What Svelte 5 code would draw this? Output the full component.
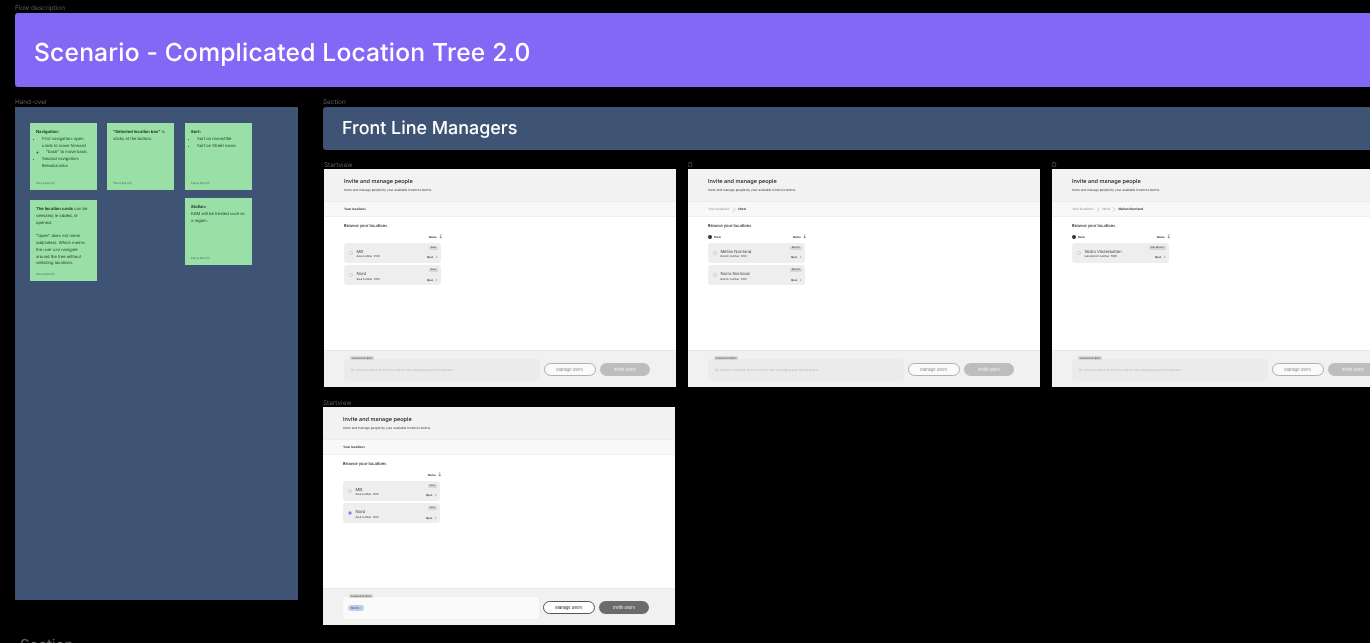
<script>
    const frames = [
        {
            label: "Startview", x: 324, y: 169,
            crumbs: [], back: false, selected: null,
            cards: [
                { name: "Mitt", sub: "Area number: 2100", tag: "Area" },
                { name: "Nord", sub: "Area number: 2100", tag: "Area" },
            ],
        },
        {
            label: "D", x: 688, y: 169,
            crumbs: ["Your locations"], current: "Nord", back: true, selected: null,
            cards: [
                { name: "Mellan Norrland", sub: "Branch number: 2100", tag: "Branch" },
                { name: "Norra Norrland", sub: "Branch number: 2100", tag: "Branch" },
            ],
        },
        {
            label: "D", x: 1052, y: 169,
            crumbs: ["Your locations", "Nord"], current: "Mellan Norrland", back: true, selected: null,
            cards: [
                { name: "Södra Västerbotten", sub: "Sub-Branch number: 7900", tag: "Sub-Branch" },
            ],
        },
        {
            label: "Startview", x: 323, y: 407,
            crumbs: [], back: false, selected: "Nord",
            cards: [
                { name: "Mitt", sub: "Area number: 2100", tag: "Area" },
                { name: "Nord", sub: "Area number: 2100", tag: "Area" },
            ],
        },
    ];
</script>

<div class="canvas">
    <div class="label top-label" style="left: 15px; top: 5px;">Flow description</div>
    <div class="banner">Scenario - Complicated Location Tree 2.0</div>

    <div class="label top-label" style="left: 15px; top: 99px;">Hand-over</div>
    <div class="handover">
        <div class="note" style="left: 15px; top: 16px;">
            <div class="note__body">
                <b>Navigation:</b>
                <ul>
                    <li>First navigation: open cards to move forward
                        <ul><li>"back" to move back.</li></ul>
                    </li>
                    <li>Second navigation: Breadcrumbs</li>
                </ul>
            </div>
            <div class="note__author">Fanny Barrsjö</div>
        </div>
        <div class="note" style="left: 92px; top: 16px;">
            <div class="note__body"><b>"Selected location box"</b> is sticky at the bottom.</div>
            <div class="note__author">Fanny Barrsjö</div>
        </div>
        <div class="note" style="left: 170px; top: 16px;">
            <div class="note__body">
                <b>Sort:</b>
                <ul>
                    <li>Sort on name/title</li>
                    <li>Sort on Street name</li>
                </ul>
            </div>
            <div class="note__author">Fanny Barrsjö</div>
        </div>
        <div class="note note--tall" style="left: 15px; top: 93px;">
            <div class="note__body">
                <b>The location cards</b> can be selected; ie added, or opened.<br /><br />
                "Open" does not mean add/select. Which means the user can navigate around the tree without selecting locations.
            </div>
            <div class="note__author">Fanny Barrsjö</div>
        </div>
        <div class="note" style="left: 170px; top: 91px;">
            <div class="note__body"><b>Stolian:</b><br />KAM will be treated such as a region.</div>
            <div class="note__author">Fanny Barrsjö</div>
        </div>
    </div>

    <div class="label top-label" style="left: 323px; top: 99px;">Section</div>
    <div class="section-head">Front Line Managers</div>

    {#each frames as frame}
        <div class="label frame-label" style="left: {frame.x}px; top: {frame.y - 7}px;">{frame.label}</div>
        <div class="frame" style="left: {frame.x}px; top: {frame.y}px;">
            <header class="frame__head">
                <h1>Invite and manage people</h1>
                <p>Invite and manage people by your available locations below.</p>
            </header>
            <nav class="crumbs">
                {#each frame.crumbs as crumb}
                    <span class="crumbs__link">{crumb}</span>
                    <svg class="crumbs__sep" viewBox="0 0 6 8"><path d="M1.5 .8 4.6 4 1.5 7.2" /></svg>
                {/each}
                <span class="crumbs__current">{frame.current ?? "Your locations"}</span>
            </nav>
            <main class="browse">
                <h2>Browse your locations</h2>
                <div class="browse__bar">
                    {#if frame.back}
                        <span class="back"><i></i>Back</span>
                    {/if}
                    <span class="sort">Name
                        <svg viewBox="0 0 6 8"><path d="M3 .6V7M1 5l2 2.2L5 5" /></svg>
                    </span>
                </div>
                <div class="cards">
                    {#each frame.cards as card}
                        <div class="card">
                            <span class="radio" class:radio--on={frame.selected === card.name}></span>
                            <div class="card__text">
                                <div class="card__name">{card.name}</div>
                                <div class="card__sub">{card.sub}</div>
                            </div>
                            <div class="card__side">
                                <span class="tag">{card.tag}</span>
                                <span class="open">Open
                                    <svg viewBox="0 0 6 8"><path d="M2 1.5 4.2 4 2 6.5" /></svg>
                                </span>
                            </div>
                        </div>
                    {/each}
                </div>
            </main>
            <footer class="foot" class:foot--active={frame.selected}>
                <div class="foot__box">
                    <span class="foot__label">Selected location</span>
                    {#if frame.selected}
                        <span class="pill">{frame.selected} ×</span>
                    {:else}
                        <span class="foot__empty">No location selected. Choose one to start managing and inviting users.</span>
                    {/if}
                </div>
                <button class="btn btn--ghost">Manage users</button>
                <button class="btn btn--solid">Invite users</button>
            </footer>
        </div>
    {/each}

    <div class="section-bottom">Section</div>
</div>

<style>
    :global(body) {
        background: #000;
        overflow: hidden;
    }

    .canvas {
        position: relative;
        width: 1370px;
        height: 643px;
        overflow: hidden;
        background: #000;
        font-family: Inter, "Liberation Sans", sans-serif;
        text-rendering: geometricPrecision;
    }

    .label {
        position: absolute;
        color: #5c5c5c;
        font-size: 6.4px;
        line-height: 7px;
        filter: blur(0.3px);
    }

    .banner {
        position: absolute;
        left: 15px;
        top: 13px;
        width: 1400px;
        height: 74px;
        box-sizing: border-box;
        padding: 3px 0 0 19px;
        display: flex;
        align-items: center;
        border-radius: 3px;
        background: #8367f5;
        color: #fff;
        font-size: 24.6px;
        font-weight: 500;
        letter-spacing: 0.2px;
        filter: blur(0.4px);
    }

    .handover {
        position: absolute;
        left: 15px;
        top: 107px;
        width: 283px;
        height: 493px;
        background: #3f5475;
    }

    .note {
        position: absolute;
        width: 67px;
        height: 67px;
        box-sizing: border-box;
        padding: 6px 5px 5px 6px;
        display: flex;
        flex-direction: column;
        justify-content: space-between;
        background: #9adfa6;
        color: #1f3a28;
        font-size: 4.1px;
        line-height: 6.8px;
        filter: blur(0.35px);
    }

    .note--tall {
        height: 81px;
    }

    .note ul {
        margin: 0;
        padding-left: 6px;
    }

    .note ul ul {
        padding-left: 4px;
    }

    .note__author {
        font-size: 2.9px;
        line-height: 4px;
        color: #4b6a55;
    }

    .section-head {
        position: absolute;
        left: 323px;
        top: 107px;
        width: 1100px;
        height: 43px;
        box-sizing: border-box;
        padding-left: 19px;
        display: flex;
        align-items: center;
        border-radius: 3px;
        background: #3f5475;
        color: #fff;
        font-size: 17.9px;
        font-weight: 500;
        filter: blur(0.35px);
    }

    .frame {
        position: absolute;
        width: 352px;
        height: 218px;
        display: flex;
        flex-direction: column;
        background: #fff;
        color: #1a1a1a;
        filter: blur(0.4px);
    }

    .frame__head {
        height: 32px;
        box-sizing: border-box;
        padding: 10px 20px 0;
        background: #f2f2f2;
    }

    h1 {
        margin: 0;
        font-size: 5.6px;
        line-height: 7px;
        font-weight: 500;
    }

    .frame__head p {
        margin: 2px 0 0;
        font-size: 3.1px;
        line-height: 4px;
        color: #333;
    }

    .crumbs {
        height: 16px;
        box-sizing: border-box;
        padding: 0 20px;
        display: flex;
        align-items: center;
        gap: 2.4px;
        background: #f8f8f8;
        font-size: 3.2px;
        border-top: 0.5px solid #ececec;
        border-bottom: 0.5px solid #f0f0f0;
    }

    .crumbs__link {
        color: #8a8a8a;
    }

    .crumbs__current {
        font-weight: 600;
    }

    .crumbs__sep {
        width: 4px;
        height: 5px;
        fill: none;
        stroke: #777;
        stroke-width: 0.6;
    }

    .browse {
        flex: 1;
        box-sizing: border-box;
        padding: 6px 20px 0;
    }

    h2 {
        margin: 0;
        font-size: 4.1px;
        line-height: 5px;
        font-weight: 500;
    }

    .browse__bar {
        width: 98px;
        height: 6px;
        margin-top: 5.5px;
        display: flex;
        align-items: center;
        justify-content: space-between;
        font-size: 2.9px;
        font-weight: 600;
    }

    .back {
        display: flex;
        align-items: center;
        gap: 2px;
    }

    .back i {
        width: 4px;
        height: 4px;
        border-radius: 50%;
        background: #333;
    }

    .sort {
        margin-left: auto;
        display: flex;
        align-items: center;
        gap: 1.5px;
    }

    .sort svg {
        width: 3.5px;
        height: 4.6px;
        fill: none;
        stroke: #222;
        stroke-width: 0.7;
    }

    .cards {
        width: 97px;
        margin-top: 3.3px;
        display: flex;
        flex-direction: column;
        gap: 2.5px;
    }

    .card {
        height: 20px;
        box-sizing: border-box;
        padding: 0 3.5px 0 4.5px;
        display: flex;
        align-items: center;
        gap: 3.5px;
        border-radius: 3px;
        background: #eeeeee;
    }

    .radio {
        width: 4.4px;
        height: 4.4px;
        box-sizing: border-box;
        border-radius: 50%;
        border: 0.5px solid #cfcfcf;
        background: #f4f4f4;
        flex: none;
    }

    .radio--on {
        border-color: #b9adf8;
        background: radial-gradient(circle, #7a5cf5 50%, #e4dffc 55%);
    }

    .card__text {
        flex: 1;
        padding-top: 2px;
    }

    .card__name {
        font-size: 4.1px;
        line-height: 5px;
        color: #444;
    }

    .card__sub {
        margin-top: 1.6px;
        font-size: 2.6px;
        line-height: 3.4px;
        color: #333;
    }

    .card__side {
        align-self: stretch;
        padding: 3.2px 0 3.6px;
        display: flex;
        flex-direction: column;
        align-items: flex-end;
        justify-content: space-between;
    }

    .tag {
        padding: 0 1.6px;
        border-radius: 1.5px;
        background: #d6d6d6;
        font-size: 2.4px;
        line-height: 4px;
        color: #333;
    }

    .open {
        display: flex;
        align-items: center;
        gap: 1.2px;
        font-size: 2.6px;
        line-height: 4px;
        font-weight: 500;
    }

    .open svg {
        width: 3px;
        height: 4px;
        fill: none;
        stroke: #333;
        stroke-width: 0.6;
    }

    .foot {
        height: 37px;
        box-sizing: border-box;
        padding: 8px 26px 7px 20px;
        display: flex;
        align-items: center;
        gap: 4.5px;
        background: #f1f1f1;
        border-top: 0.5px solid #e8e8e8;
    }

    .foot__box {
        position: relative;
        width: 195.5px;
        height: 22px;
        box-sizing: border-box;
        padding-left: 7px;
        display: flex;
        align-items: center;
        border-radius: 4px;
        background: #ebebeb;
    }

    .foot--active .foot__box {
        background: #fafafa;
        padding-left: 5px;
    }

    .foot__label {
        position: absolute;
        left: 6px;
        top: -2.4px;
        padding: 0 1.5px;
        border-radius: 1.5px;
        background: #d8d8d8;
        font-size: 2.6px;
        line-height: 4px;
        color: #444;
    }

    .foot__empty {
        font-size: 3.1px;
        color: #b5b5b5;
    }

    .pill {
        padding: 0 3px;
        border-radius: 3px;
        background: #bcd0ee;
        font-size: 3px;
        line-height: 6px;
        color: #333;
    }

    .btn {
        height: 12.5px;
        padding: 0;
        border-radius: 7px;
        font-family: inherit;
        font-size: 4px;
        flex: none;
    }

    .btn--ghost {
        width: 51.5px;
        background: #fafafa;
        border: 0.6px solid #b0b0b0;
        color: #8c8c8c;
    }

    .btn--solid {
        width: 50px;
        background: #bdbdbd;
        border: none;
        color: #f4f4f4;
    }

    .foot--active .btn--ghost {
        background: #fff;
        border-color: #555;
        color: #222;
    }

    .foot--active .btn--solid {
        background: #6b6b6b;
        color: #eee;
    }

    .section-bottom {
        position: absolute;
        left: 20px;
        top: 636px;
        color: #6a6a6a;
        font-size: 15px;
        line-height: 18px;
        filter: blur(0.3px);
    }
</style>
